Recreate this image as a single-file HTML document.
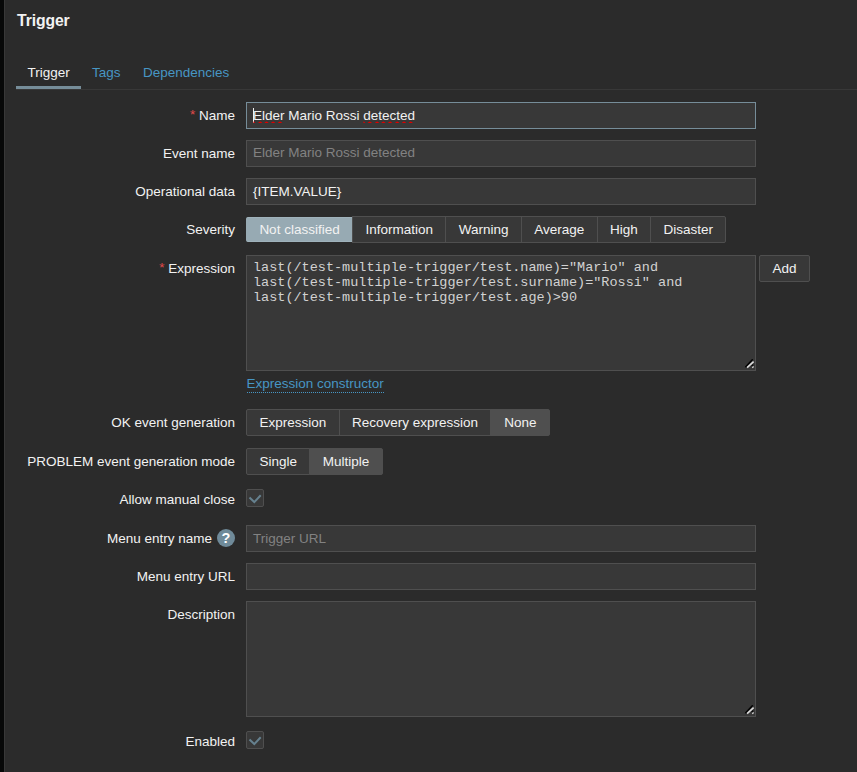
<!DOCTYPE html>
<html>
<head>
<meta charset="utf-8">
<title>Trigger</title>
<style>
html,body{margin:0;padding:0;}
body{width:857px;height:772px;overflow:hidden;background:#2b2b2b;position:relative;
 font-family:"Liberation Sans",sans-serif;font-size:13.5px;color:#f2f2f2;}
.abs{position:absolute;}
#strip{left:0;top:0;width:4px;height:772px;background:#070808;border-right:1px solid #383838;}
#title{left:17px;top:12px;font-size:15.75px;letter-spacing:-0.12px;font-weight:bold;line-height:18px;color:#f2f2f2;}
.tab{top:64.5px;line-height:16px;height:16px;white-space:nowrap;}
.link{color:#4796c4;}
#tabline{left:16px;top:89px;width:841px;height:1px;background:#383838;}
#tabsel{left:16px;top:86px;width:65px;height:3px;background:#768d99;}
.lbl{right:622px;white-space:nowrap;line-height:16px;height:16px;text-align:right;}
.req{color:#e24a4a;position:relative;top:-1px;}
.inp{left:246px;width:508px;height:25px;border:1px solid #4f4f4f;background:#383838;}
.inp span{position:absolute;left:6px;top:4.5px;line-height:16px;white-space:nowrap;}
.ph{color:#828282;}
.rl{left:246px;height:27px;display:flex;white-space:nowrap;}
.rl span{display:block;box-sizing:border-box;height:27px;line-height:25px;padding:0 12.375px;border:1px solid #4f4f4f;background:#383838;margin-left:-1px;}
.rl span:first-child{margin-left:0;border-radius:2px 0 0 2px;}
.rl span:last-child{border-radius:0 2px 2px 0;}
.rl span.on{background:#4f4f4f;}
.rl span.nc{background:#97aab3;border-color:#9fb2bb #97aab3 #9fb2bb #97aab3;height:25px;margin-top:1px;line-height:23px;}
.mono{font-family:"Liberation Mono",monospace;font-size:13.5px;line-height:15px;white-space:pre;color:#d2d2d2;}
.cb{left:246px;width:16px;height:16px;border:1px solid #4f4f4f;background:#383838;border-radius:2px;}
.cb svg{position:absolute;left:-1px;top:-1px;}
.rs{left:745px;width:10px;height:10px;}
</style>
</head>
<body>
<div id="strip" class="abs"></div>
<div id="title" class="abs">Trigger</div>

<div class="abs tab" style="left:27.5px;">Trigger</div>
<div class="abs tab link" style="left:92px;">Tags</div>
<div class="abs tab link" style="left:143px;">Dependencies</div>
<div id="tabline" class="abs"></div>
<div id="tabsel" class="abs"></div>

<!-- Name -->
<div class="abs lbl" style="top:107.5px;"><span class="req">*</span> Name</div>
<div class="abs inp" style="top:102px;border-color:#768d99;"><span>Elder Mario Rossi detected</span></div>
<div class="abs" style="left:253px;top:108px;width:1px;height:15px;background:#f2f2f2;"></div>
<svg class="abs" style="left:252px;top:120px;" width="170" height="4" viewBox="0 0 170 4">
 <g fill="#dd0000"><path d="M1.4 3 L1.4 1.6 Q2.3 1.6 3.3 3 Z"/><path d="M6.0 3 Q8.2 0 10.4 3 Z"/><path d="M12.3 3 Q14.5 0 16.7 3 Z"/><path d="M18.9 3 Q21.1 0 23.3 3 Z"/><path d="M25.8 3 Q28.0 0 30.2 3 Z"/><path d="M111.4 3 L111.4 1.6 Q112.3 1.6 113.3 3 Z"/><path d="M115.6 3 Q117.8 0 120.0 3 Z"/><path d="M122.9 3 Q125.1 0 127.3 3 Z"/><path d="M129.2 3 Q131.4 0 133.6 3 Z"/><path d="M135.9 3 Q138.1 0 140.3 3 Z"/><path d="M143.0 3 Q145.2 0 147.4 3 Z"/><path d="M149.8 3 Q152.0 0 154.2 3 Z"/><path d="M156.5 3 Q158.7 0 160.9 3 Z"/></g>
</svg>

<!-- Event name -->
<div class="abs lbl" style="top:145.5px;">Event name</div>
<div class="abs inp" style="top:140px;"><span class="ph" style="top:4px;">Elder Mario Rossi detected</span></div>

<!-- Operational data -->
<div class="abs lbl" style="top:183.5px;">Operational data</div>
<div class="abs inp" style="top:178px;"><span>{ITEM.VALUE}</span></div>

<!-- Severity -->
<div class="abs lbl" style="top:221.5px;">Severity</div>
<div class="abs rl" style="top:216px;">
  <span class="nc">Not classified</span><span>Information</span><span>Warning</span><span>Average</span><span>High</span><span>Disaster</span>
</div>

<!-- Expression -->
<div class="abs lbl" style="top:260.5px;"><span class="req">*</span> Expression</div>
<div class="abs inp" style="top:255px;height:114px;">
<div class="abs mono" style="left:6px;top:4px;">last(/test-multiple-trigger/test.name)="Mario" and
last(/test-multiple-trigger/test.surname)="Rossi" and
last(/test-multiple-trigger/test.age)>90</div>
</div>
<svg class="abs rs" style="top:359px;" viewBox="0 0 10 10"><path d="M0.4 8.2 L7.7 0.3" stroke="#000" stroke-width="1.4"/><path d="M2.1 8.7 L8.6 2.6" stroke="#dcdcdc" stroke-width="1.6"/><path d="M6.6 7.2 L8.2 5.6" stroke="#000" stroke-width="1.2"/><path d="M7.3 8.8 L8.6 7.6" stroke="#dcdcdc" stroke-width="1.3"/></svg>
<div class="abs" style="left:759px;top:255px;width:49px;height:25px;border:1px solid #4f4f4f;background:#383838;text-align:center;line-height:25px;border-radius:2px;">Add</div>
<div class="abs link" style="left:246.5px;top:376px;line-height:16px;border-bottom:1px dotted #4796c4;">Expression constructor</div>

<!-- OK event generation -->
<div class="abs lbl" style="top:414.5px;">OK event generation</div>
<div class="abs rl" style="top:409px;">
  <span>Expression</span><span>Recovery expression</span><span class="on" style="padding:0 12.875px;">None</span>
</div>

<!-- PROBLEM event generation mode -->
<div class="abs lbl" style="top:453.5px;">PROBLEM event generation mode</div>
<div class="abs rl" style="top:448px;">
  <span>Single</span><span class="on">Multiple</span>
</div>

<!-- Allow manual close -->
<div class="abs lbl" style="top:491.5px;">Allow manual close</div>
<div class="abs cb" style="top:489px;"><svg width="18" height="18" viewBox="0 0 18 18"><path d="M3.5 8.6 L8.3 13.1 L14.7 6.2" fill="none" stroke="#66818f" stroke-width="2"/></svg></div>

<!-- Menu entry name -->
<div class="abs lbl" style="top:530.5px;right:645px;">Menu entry name</div>
<div class="abs" style="left:217px;top:529px;width:18px;height:18px;border-radius:9px;background:#6f8a99;color:#fff;font-weight:bold;font-size:14.5px;line-height:18px;text-align:center;">?</div>
<div class="abs inp" style="top:525px;"><span class="ph">Trigger URL</span></div>

<!-- Menu entry URL -->
<div class="abs lbl" style="top:568.5px;">Menu entry URL</div>
<div class="abs inp" style="top:563px;"></div>

<!-- Description -->
<div class="abs lbl" style="top:606.5px;">Description</div>
<div class="abs inp" style="top:601px;height:114px;"></div>
<svg class="abs rs" style="top:705px;" viewBox="0 0 10 10"><path d="M0.4 8.2 L7.7 0.3" stroke="#000" stroke-width="1.4"/><path d="M2.1 8.7 L8.6 2.6" stroke="#dcdcdc" stroke-width="1.6"/><path d="M6.6 7.2 L8.2 5.6" stroke="#000" stroke-width="1.2"/><path d="M7.3 8.8 L8.6 7.6" stroke="#dcdcdc" stroke-width="1.3"/></svg>

<!-- Enabled -->
<div class="abs lbl" style="top:733.5px;">Enabled</div>
<div class="abs cb" style="top:731px;"><svg width="18" height="18" viewBox="0 0 18 18"><path d="M3.5 8.6 L8.3 13.1 L14.7 6.2" fill="none" stroke="#66818f" stroke-width="2"/></svg></div>
</body>
</html>
